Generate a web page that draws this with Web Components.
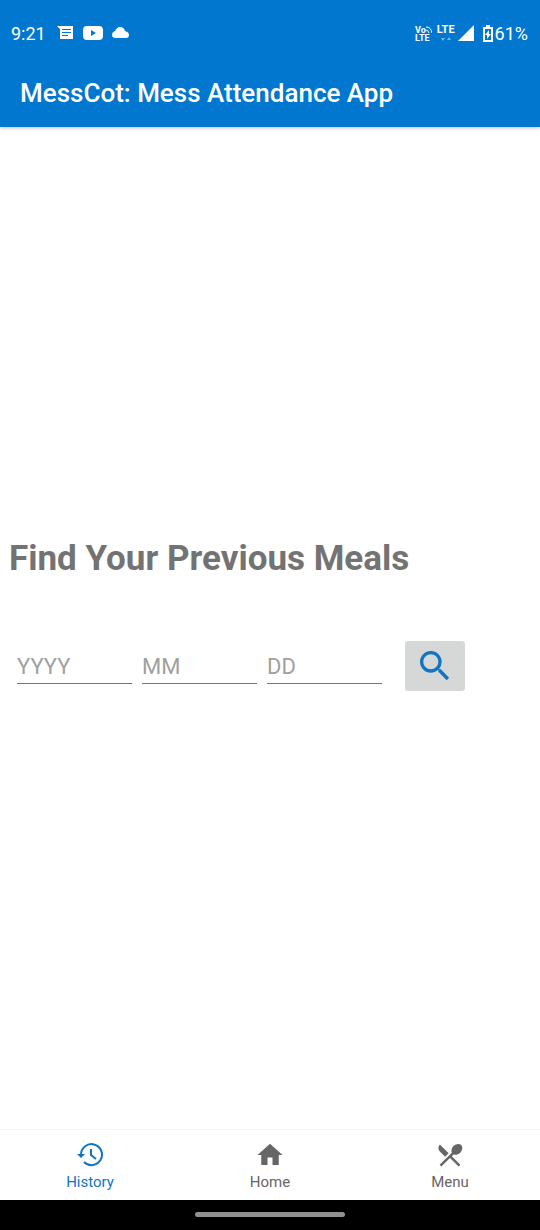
<!DOCTYPE html>
<html lang="en">
<head>
<meta charset="utf-8">
<meta name="viewport" content="width=device-width, initial-scale=1">
<title>MessCot: Mess Attendance App</title>
<style>
html, body { height: 100%; margin: 0; }
body { font-family: Roboto, "Liberation Sans", sans-serif; background: #fff; }
</style>
</head>
<body>
<mess-app></mess-app>
<script>
const define = (name, html) => customElements.define(name, class extends HTMLElement {
  constructor() {
    super();
    const t = document.createElement('template');
    t.innerHTML = html;
    this.attachShadow({ mode: 'open' }).append(t.content.cloneNode(true));
  }
});

define('status-bar', `
<style>
:host { display: flex; align-items: center; height: 60px; padding: 8px 12px 0 11px; box-sizing: border-box; color: #fff; font-size: 18px; line-height: 24px; }
svg { display: block; fill: currentColor; flex: none; }
.left, .right { display: flex; align-items: center; }
.left { gap: 9px; flex: 1; }
.left svg { margin-bottom: 2px; }
time { margin-right: 2px; }
.volte { font-size: 9px; line-height: 8px; font-weight: 700; display: grid; margin-right: 5px; }
.volte span { display: flex; }
.lte { font-size: 11px; line-height: 10px; font-weight: 700; display: grid; justify-items: center; margin: 0 3px 2px 0; }
.signal { margin: 0 9px 2px 0; }
.battery { margin: 0 2px 2px 0; }
</style>
<div class="left">
  <time>9:21</time>
  <svg width="17" height="14" viewBox="0 0 17 14"><path fill-rule="evenodd" d="M0 0h16v13H3V3zM5 3v1h9V3zm0 3v1h9V6zm0 3v1h6V9z"/></svg>
  <svg width="20" height="14" viewBox="0 0 20 14"><path fill-rule="evenodd" d="M4 0h12q4 0 4 4v6q0 4-4 4H4q-4 0-4-4V4q0-4 4-4zM8 4v6l5-3z"/></svg>
  <svg width="18" height="12" viewBox="0 0 18 12"><path d="M4 11Q0 11 0 8q0-3 3-4 2-4 5-4 4 0 5 4 4 1 4 4 0 3-3 3z"/></svg>
</div>
<div class="right">
  <div class="volte"><span>Vo<svg width="6" height="7" viewBox="0 0 6 7"><path style="fill:none;stroke:currentColor" d="M0 1q5 0 6 6M0 4q2 0 3 3"/></svg></span><span>LTE</span></div>
  <div class="lte"><span>LTE</span><svg width="10" height="7" viewBox="0 0 10 7" opacity=".45"><path d="M0 3h4L2 6zM6 5h4L8 2z"/></svg></div>
  <svg class="signal" width="16" height="16" viewBox="0 0 16 16"><path d="M16 0v16H0z"/></svg>
  <svg class="battery" width="10" height="17" viewBox="0 0 10 17"><path fill-rule="evenodd" d="M3 0h4v2h3v15H0V2h3zM2 4v11h6V4z"/><path d="M6 5v4h2l-4 5v-4H2z"/></svg>
  <span>61%</span>
</div>`);

define('app-bar', `
<style>
:host { display: block; background: #0277d0; color: #fff; box-shadow: 0 1px 4px rgba(0,0,0,.25); }
h1 { margin: 0; padding: 18px 20px 19px; font-size: 26px; line-height: 30px; font-weight: 500; }
</style>
<slot></slot><h1>MessCot: Mess Attendance App</h1>`);

customElements.define('date-field', class extends HTMLElement {
  constructor() {
    super();
    this.attachShadow({ mode: 'open' }).innerHTML = `
<style>
:host { display: block; flex: 0 1 115px; min-width: 0; }
input { display: block; width: 100%; box-sizing: border-box; border: 0; border-bottom: 1px solid #757575; border-radius: 0; padding: 2px 0 0; height: 36px; margin: 0; background: none; outline: 0; font: 22px/28px Roboto, "Liberation Sans", sans-serif; color: #333; }
input::placeholder { color: #a0a0a0; opacity: 1; }
</style>
<input type="text" inputmode="numeric">`;
    const input = this.shadowRoot.querySelector('input');
    input.placeholder = this.getAttribute('placeholder');
    input.setAttribute('aria-label', this.getAttribute('label'));
  }
});

define('meal-search', `
<style>
:host { display: flex; flex-direction: column; justify-content: center; }
h2 { margin: 0 9px; font-size: 35px; line-height: 42px; font-weight: 700; color: #737373; }
form { display: flex; align-items: center; gap: 10px; margin: 61px 17px 27px; }
button { flex: none; width: 60px; height: 50px; margin-left: 13px; padding: 0; border: 0; border-radius: 3px; background: #d6d8d7; color: #0f74c4; display: grid; place-items: center; }
svg { display: block; fill: currentColor; }
</style>
<h2>Find Your Previous Meals</h2>
<form>
  <date-field label="Year" placeholder="YYYY"></date-field>
  <date-field label="Month" placeholder="MM"></date-field>
  <date-field label="Day" placeholder="DD"></date-field>
  <button type="button" aria-label="Search"><svg width="40" height="40" viewBox="0 0 24 24"><path d="M15.5 14h-.79l-.28-.27A6.47 6.47 0 0 0 16 9.500 6.500 6.500 0 1 0 9.500 16c1.610 0 3.090-.59 4.230-1.570l.27.28v.79l5 4.990L20.490 19zm-6 0C7.010 14 5 11.990 5 9.500S7.010 5 9.500 5 14 7.010 14 9.500 11.990 14 9.500 14z"/></svg></button>
</form>`);

define('nav-item', `
<style>
:host { display: block; flex: 1; color: #666; }
:host([selected]) { color: #0f74c4; }
a { display: flex; flex-direction: column; align-items: center; gap: 2px; padding: 10px 0 8px; color: inherit; text-decoration: none; font-size: 15px; line-height: 20px; }
</style>
<a href="#"><slot name="icon"></slot><span><slot></slot></span></a>`);

define('bottom-nav', `
<style>
:host { display: flex; border-top: 1px solid #f4f4f4; background: #fff; }
svg { display: block; fill: currentColor; }
</style>
<nav-item selected><svg slot="icon" width="30" height="30" viewBox="0 0 30 30"><g fill="none" stroke="currentColor" stroke-width="2"><path d="M6 15A10.500 10.500 0 1 1 9 22"/><path d="M16 9v6l5 4"/></g><path d="M2 14h8l-4 4z"/></svg>History</nav-item>
<nav-item><svg slot="icon" width="30" height="30" viewBox="0 0 24 24"><path d="M10 20v-6h4v6h5v-8h3L12 3 2 12h3v8z"/></svg>Home</nav-item>
<nav-item><svg slot="icon" width="30" height="30" viewBox="0 0 24 24"><path d="M8.100 13.340l2.830-2.830L3.910 3.500c-1.560 1.560-1.560 4.090 0 5.660zm6.780-1.810c1.530.71 3.680.21 5.270-1.380 1.910-1.910 2.280-4.650.81-6.120-1.460-1.460-4.200-1.100-6.120.81-1.590 1.590-2.090 3.740-1.380 5.270L3.700 19.870l1.410 1.410L12 14.410l6.880 6.880 1.410-1.410L13.410 13z"/></svg>Menu</nav-item>`);

define('gesture-bar', `
<style>
:host { display: flex; justify-content: center; align-items: center; height: 30px; padding-bottom: 2px; box-sizing: border-box; background: #000; }
i { width: 150px; height: 5px; border-radius: 3px; background: #919191; }
</style><i></i>`);

define('mess-app', `
<style>
:host { display: flex; flex-direction: column; min-height: 100vh; background: #fff; }
meal-search { flex: 1; }
</style>
<app-bar><status-bar></status-bar></app-bar>
<meal-search></meal-search>
<bottom-nav></bottom-nav>
<gesture-bar></gesture-bar>`);
</script>
</body>
</html>
